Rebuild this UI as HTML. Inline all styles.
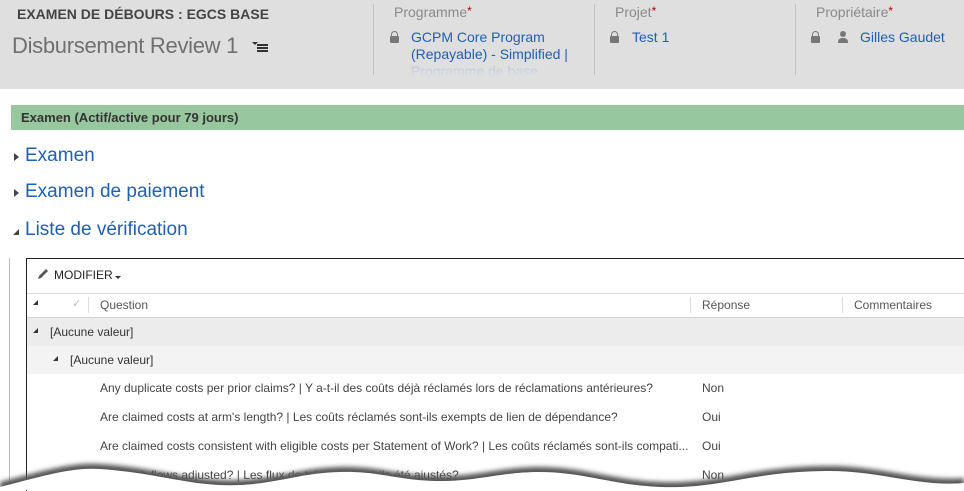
<!DOCTYPE html>
<html><head><meta charset="utf-8"><style>
body{margin:0;width:964px;height:490px;overflow:hidden;background:#fff;font-family:"Segoe UI","Liberation Sans",sans-serif;position:relative}
.a{position:absolute;white-space:nowrap}
.hdr{position:absolute;left:0;top:0;width:964px;height:89px;background:#dfdfdf}
.lbl{color:#8a8a8a;font-size:14px}
.lnk{color:#1f5fb5;font-size:14px}
.star{color:#b00;font-size:12px;vertical-align:top}
.sep{position:absolute;top:4px;width:1px;height:71px;background:#c3c3c3}
.lock{position:absolute;width:9px;height:7px;background:#777;border-radius:1px}
.lock:before{content:"";position:absolute;left:1px;top:-5px;width:5px;height:5px;border:1.5px solid #777;border-bottom:none;border-radius:4px 4px 0 0}
.sec{color:#1f5fb5;font-size:19px}
.tri{position:absolute;width:0;height:0}
.t{font-size:12px;color:#444}
</style></head><body>
<div class="hdr"></div>
<div class="a" style="left:17px;top:6px;font-size:14px;font-weight:bold;color:#444">EXAMEN DE DÉBOURS : EGCS BASE</div>
<div class="a" style="left:12px;top:33px;font-size:22px;color:#707070;letter-spacing:-0.3px">Disbursement Review 1</div>
<div class="a" style="left:252px;top:42px;width:0;height:0;border-left:3px solid transparent;border-right:3px solid transparent;border-top:3px solid #333"></div>
<div class="a" style="left:257px;top:44px;width:11px;height:2px;background:#333;box-shadow:0 3px #333,0 6px #333"></div>
<div class="sep" style="left:373px"></div>
<div class="sep" style="left:594px"></div>
<div class="sep" style="left:795px"></div>
<div class="a lbl" style="left:394px;top:4px">Programme<span class="star">*</span></div>
<div class="lock" style="left:390px;top:36px"></div>
<div class="a lnk" style="left:411px;top:29px;line-height:17px">GCPM Core Program<br>(Repayable) - Simplified |<br><span style="color:#a9bfe0">Programme de base</span></div>
<div class="a" style="left:380px;top:63px;width:210px;height:14px;background:linear-gradient(rgba(223,223,223,0),#dfdfdf)"></div>
<div class="a" style="left:374px;top:77px;width:220px;height:12px;background:#dfdfdf"></div>
<div class="a lbl" style="left:615px;top:4px">Projet<span class="star">*</span></div>
<div class="lock" style="left:610px;top:36px"></div>
<div class="a lnk" style="left:632px;top:29px">Test 1</div>
<div class="a lbl" style="left:816px;top:4px">Propriétaire<span class="star">*</span></div>
<div class="lock" style="left:811px;top:36px"></div>
<div class="a" style="left:840px;top:31px;width:6px;height:6px;background:#777;border-radius:50%"></div>
<div class="a" style="left:838px;top:38px;width:10px;height:5px;background:#777;border-radius:4px 4px 0 0"></div>
<div class="a lnk" style="left:860px;top:29px">Gilles Gaudet</div>
<div class="a" style="left:11px;top:105px;width:953px;height:25px;background:#97c79c"></div>
<div class="a" style="left:21px;top:110px;font-size:13px;font-weight:bold;color:#333">Examen (Actif/active pour 79 jours)</div>
<div class="tri" style="left:14px;top:153px;border-top:4px solid transparent;border-bottom:4px solid transparent;border-left:5px solid #444"></div>
<div class="a sec" style="left:25px;top:145px">Examen</div>
<div class="tri" style="left:14px;top:189px;border-top:4px solid transparent;border-bottom:4px solid transparent;border-left:5px solid #444"></div>
<div class="a sec" style="left:25px;top:181px">Examen de paiement</div>
<div class="tri" style="left:13px;top:229px;border-left:6px solid transparent;border-bottom:6px solid #444"></div>
<div class="a sec" style="left:25px;top:219px">Liste de vérification</div>
<div class="a" style="left:9px;top:258px;width:1px;height:232px;background:#bbb"></div>
<div class="a" style="left:26px;top:258px;width:938px;height:232px;border-left:1px solid #222;border-top:1px solid #222"></div>
<svg class="a" style="left:36px;top:267px" width="14" height="14"><path d="M2 12 L3 9 L10 2 L12 4 L5 11 Z" fill="#555"/></svg>
<div class="a" style="left:54px;top:268px;font-size:12px;color:#222">MODIFIER</div>
<div class="tri" style="left:115px;top:276px;border-left:3px solid transparent;border-right:3px solid transparent;border-top:3px solid #333"></div>
<div class="a" style="left:27px;top:293px;width:937px;height:1px;background:#ddd"></div>
<div class="a" style="left:27px;top:317px;width:937px;height:1px;background:#d4d4d4"></div>
<div class="tri" style="left:33px;top:300px;border-left:5px solid transparent;border-bottom:5px solid #333"></div>
<div class="a" style="left:72px;top:297px;font-size:11px;color:#bbb">✓</div>
<div class="a" style="left:88px;top:297px;width:1px;height:16px;background:#ddd"></div>
<div class="a t" style="left:100px;top:298px;color:#555">Question</div>
<div class="a" style="left:690px;top:297px;width:1px;height:16px;background:#ddd"></div>
<div class="a t" style="left:702px;top:298px;color:#555">Réponse</div>
<div class="a" style="left:842px;top:297px;width:1px;height:16px;background:#ddd"></div>
<div class="a t" style="left:854px;top:298px;color:#555">Commentaires</div>
<div class="a" style="left:27px;top:318px;width:937px;height:28px;background:#ececec"></div>
<div class="tri" style="left:33px;top:328px;border-left:5px solid transparent;border-bottom:5px solid #333"></div>
<div class="a t" style="left:50px;top:325px;color:#333">[Aucune valeur]</div>
<div class="a" style="left:27px;top:346px;width:937px;height:28px;background:#f3f3f3"></div>
<div class="tri" style="left:53px;top:356px;border-left:5px solid transparent;border-bottom:5px solid #333"></div>
<div class="a t" style="left:70px;top:353px;color:#333">[Aucune valeur]</div>
<div class="a t" style="left:100px;top:381px">Any duplicate costs per prior claims? | Y a-t-il des coûts déjà réclamés lors de réclamations antérieures?</div>
<div class="a t" style="left:702px;top:381px">Non</div>
<div class="a t" style="left:100px;top:410px">Are claimed costs at arm's length? | Les coûts réclamés sont-ils exempts de lien de dépendance?</div>
<div class="a t" style="left:702px;top:410px">Oui</div>
<div class="a t" style="left:100px;top:439px">Are claimed costs consistent with eligible costs per Statement of Work? | Les coûts réclamés sont-ils compati...</div>
<div class="a t" style="left:702px;top:439px">Oui</div>
<div class="a t" style="left:100px;top:468px">Are cash flows adjusted? | Les flux de trésorerie ont-ils été ajustés?</div>
<div class="a t" style="left:702px;top:468px">Non</div>
<svg class="a" style="left:0;top:455px" width="964" height="35">
<defs><filter id="s" x="-5%" y="-50%" width="110%" height="200%"><feGaussianBlur stdDeviation="2.5"/></filter></defs>
<path d="M0 27 C40 17 70 7 100 9 C160 13 190 27 240 25 C280 23 300 13 340 12 C380 11 400 21 440 21 C480 21 500 12 540 12 C590 12 620 29 680 27 C730 25 760 11 830 11 C880 11 920 27 964 23 L964 40 L0 40 Z" fill="#555" filter="url(#s)"/>
<path d="M0 32 C40 22 70 12 100 14 C160 18 190 32 240 30 C280 28 300 18 340 17 C380 16 400 26 440 26 C480 26 500 17 540 17 C590 17 620 34 680 32 C730 30 760 16 830 16 C880 16 920 32 964 28 L964 40 L0 40 Z" fill="#fff"/>
</svg>
</body></html>
